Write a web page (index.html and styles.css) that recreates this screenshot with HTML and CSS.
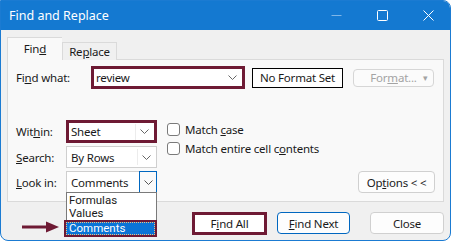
FILE: index.html
```html
<!DOCTYPE html>
<html lang="en">
<head>
    <meta charset="UTF-8">
    <meta name="viewport" content="width=device-width, initial-scale=1.0">
    <title>Find and Replace</title>
    <link rel="stylesheet" href="styles.css">
</head>
<body>
    <div class="window">
        <div class="titlebar">
            <span class="title">Find and Replace</span>
            <div class="controls">
                <svg class="ctl minimize" width="11" height="11" viewBox="0 0 11 11"><path d="M0.5 5.5h10" stroke="#7fb6e8" stroke-width="1"/></svg>
                <svg class="ctl" width="11" height="11" viewBox="0 0 11 11"><rect x="0.5" y="0.5" width="10" height="10" rx="1" fill="none" stroke="#fff" stroke-width="1"/></svg>
                <svg class="ctl" width="11" height="11" viewBox="0 0 11 11"><path d="M0.5 0.5l10 10M10.5 0.5l-10 10" stroke="#fff" stroke-width="1"/></svg>
            </div>
        </div>

        <div class="content">
            <div class="tabs">
                <div class="tab active">Fin<u>d</u></div>
                <div class="tab">Re<u>p</u>lace</div>
            </div>

            <div class="panel">
                <!-- find what row -->
                <div class="find-row">
                    <label class="find-label">Fi<u>n</u>d what:</label>
                    <div class="combo marked find-input">
                        <span class="value">review</span>
                        <svg class="chevron" width="9" height="5" viewBox="0 0 9 5"><path d="M0.5 0.5l4 4 4-4" fill="none" stroke="#666" stroke-width="1"/></svg>
                    </div>
                    <div class="format-set">No Format Set</div>
                    <div class="format-btn">For<u>m</u>at...<span class="tri">▾</span></div>
                </div>

                <div class="lower">
                    <div class="fields">
                        <label>Wit<u>h</u>in:</label>
                        <div class="combo marked">
                            <span class="value">Sheet</span>
                            <span class="sep"></span>
                            <svg class="chevron" width="9" height="5" viewBox="0 0 9 5"><path d="M0.5 0.5l4 4 4-4" fill="none" stroke="#666" stroke-width="1"/></svg>
                        </div>

                        <label><u>S</u>earch:</label>
                        <div class="combo">
                            <span class="value">By Rows</span>
                            <span class="sep"></span>
                            <svg class="chevron" width="9" height="5" viewBox="0 0 9 5"><path d="M0.5 0.5l4 4 4-4" fill="none" stroke="#666" stroke-width="1"/></svg>
                        </div>

                        <label><u>L</u>ook in:</label>
                        <div class="combo open">
                            <span class="value">Comments</span>
                            <span class="drop-btn">
                                <svg class="chevron" width="9" height="5" viewBox="0 0 9 5"><path d="M0.5 0.5l4 4 4-4" fill="none" stroke="#555" stroke-width="1"/></svg>
                            </span>
                            <ul class="dropdown">
                                <li>Formulas</li>
                                <li>Values</li>
                                <li class="selected"><span>Comments</span></li>
                            </ul>
                        </div>
                    </div>

                    <div class="checks">
                        <label class="check"><span class="box"></span><span>Match <u>c</u>ase</span></label>
                        <label class="check"><span class="box"></span><span>Match entire cell c<u>o</u>ntents</span></label>
                    </div>

                    <button class="btn options">Op<u>t</u>ions &lt; &lt;</button>
                </div>
            </div>

            <div class="footer">
                <button class="btn marked-btn">F<u>i</u>nd All</button>
                <button class="btn default"><u>F</u>ind Next</button>
                <button class="btn close">Close</button>
            </div>
        </div>

        <svg class="pointer" width="38" height="12" viewBox="0 0 38 12"><path d="M0 6h26" stroke="#6e1a34" stroke-width="3"/><path d="M24 0.5l13 5.5-13 5.5z" fill="#6e1a34"/></svg>
    </div>
</body>
</html>
```

FILE: styles.css
```css
body {
    margin: 0;
    background-color: #fff;
    font-family: "Noto Sans", "Open Sans", sans-serif;
    font-size: 11.5px;
    letter-spacing: -0.2px;
    color: #1a1a1a;
}
.window {
    position: relative;
    width: 451px;
    height: 241px;
    box-sizing: border-box;
    border: 1px solid #1b7bd2;
    border-radius: 0 8px 8px 8px;
    background-color: #f0f0f0;
    overflow: hidden;
}
.titlebar {
    height: 29px;
    background-color: #1479d1;
    display: flex;
    align-items: center;
    padding-left: 8px;
}
.title {
    color: #fff;
    font-size: 12.5px;
    letter-spacing: 0;
    flex: 1;
}
.controls {
    display: flex;
    align-items: center;
    gap: 35px;
    padding-right: 16px;
}
.ctl { display: block; }

.content {
    padding: 8px 6px 0 6px;
}
.tabs {
    display: flex;
    align-items: flex-end;
    height: 22px;
    position: relative;
    z-index: 1;
    margin-bottom: -1px;
}
.tab {
    width: 55px;
    height: 18px;
    box-sizing: border-box;
    border: 1px solid #dadada;
    border-bottom: none;
    text-align: center;
    line-height: 18px;
    background-color: #f0f0f0;
}
.tab.active {
    height: 23px;
    line-height: 21px;
    background-color: #f9f9f9;
    border-right: none;
}
.panel {
    height: 143px;
    box-sizing: border-box;
    border: 1px solid #dadada;
    background-color: #f9f9f9;
    padding: 6px 8px 0 8px;
}
.find-row {
    display: flex;
    align-items: center;
    height: 23px;
}
.find-label {
    width: 75px;
}
.combo {
    position: relative;
    display: flex;
    align-items: center;
    box-sizing: border-box;
    height: 22px;
    border: 1px solid #cfcfcf;
    background-color: #fff;
    padding-left: 4px;
}
.combo .value { flex: 1; }
.combo .chevron { display: block; margin: 0 5px 0 4px; }
.combo .sep {
    width: 1px;
    height: 16px;
    background-color: #ececec;
}
.combo.marked {
    border: 3px solid #6e1a34;
    padding-left: 2px;
}
.find-input {
    width: 154px;
    height: 23px;
}
.format-set {
    margin-left: 7px;
    width: 91px;
    height: 20px;
    box-sizing: border-box;
    border: 1px solid #000;
    background-color: #fff;
    text-align: center;
    line-height: 18px;
}
.format-btn {
    margin-left: 10px;
    width: 81px;
    height: 18px;
    box-sizing: border-box;
    border: 1px solid #d6d6d6;
    border-radius: 4px;
    background-color: #fbfbfb;
    color: #a3a3a3;
    line-height: 16px;
    text-align: center;
    position: relative;
}
.format-btn .tri {
    position: absolute;
    right: 5px;
    top: 0;
    font-size: 9px;
}

.lower {
    display: flex;
    align-items: flex-start;
    margin-top: 31px;
}
.fields {
    display: grid;
    grid-template-columns: 50px 91px;
    grid-template-rows: 23px 22px 22px;
    row-gap: 3px;
    align-items: center;
}
.fields .combo.marked { height: 23px; }
.combo.open { padding-right: 0; }
.drop-btn {
    width: 18px;
    height: 22px;
    margin: -1px -1px -1px 0;
    box-sizing: border-box;
    border: 1px solid #0067c0;
    display: flex;
    align-items: center;
    justify-content: center;
    background-color: #fafafa;
}
.drop-btn .chevron { margin: 0; }
.dropdown {
    position: absolute;
    left: -1px;
    top: 20px;
    width: 91px;
    box-sizing: border-box;
    margin: 0;
    padding: 1px 0 0 0;
    list-style: none;
    border: 1px solid #7a7a7a;
    background-color: #fff;
    z-index: 2;
    font-family: Roboto, "Noto Sans", sans-serif;
    font-size: 11.5px;
    letter-spacing: 0;
}
.dropdown li {
    height: 13px;
    line-height: 13px;
    padding-left: 2px;
    overflow: hidden;
}
.dropdown li.selected {
    height: 17px;
    margin: 0 -1px -1px -3px;
    padding-left: 0;
    border: 2px solid #6e1a34;
    box-sizing: border-box;
}
.dropdown li.selected span {
    display: block;
    height: 13px;
    line-height: 13px;
    background-color: #0a74d6;
    color: #fff;
    outline: 1px dotted #f0c080;
    outline-offset: -1px;
    padding-left: 3px;
}

.checks {
    display: flex;
    flex-direction: column;
    gap: 6px;
    margin-left: 10px;
    padding-top: 3px;
}
.check {
    display: flex;
    align-items: center;
    gap: 5px;
    height: 13px;
}
.box {
    width: 13px;
    height: 13px;
    box-sizing: border-box;
    border: 1px solid #7a7a7a;
    border-radius: 3px;
    background-color: #fff;
}

.btn {
    font-family: inherit;
    font-size: 11.5px;
    letter-spacing: -0.2px;
    color: #1a1a1a;
    height: 22px;
    padding: 0;
    box-sizing: border-box;
    border: 1px solid #d0d0d0;
    border-radius: 4px;
    background-color: #fdfdfd;
}
.options {
    margin-left: auto;
    align-self: flex-end;
    width: 77px;
}
.footer {
    display: flex;
    justify-content: flex-end;
    margin-top: 10px;
}
.marked-btn {
    width: 75px;
    height: 23px;
    border: 3px solid #6e1a34;
    border-radius: 0;
    background-color: #fff;
}
.default {
    margin-left: 10px;
    width: 73px;
    border-color: #0067c0;
}
.close {
    margin-left: 20px;
    width: 74px;
}
.pointer {
    position: absolute;
    left: 21px;
    top: 220px;
}
```
